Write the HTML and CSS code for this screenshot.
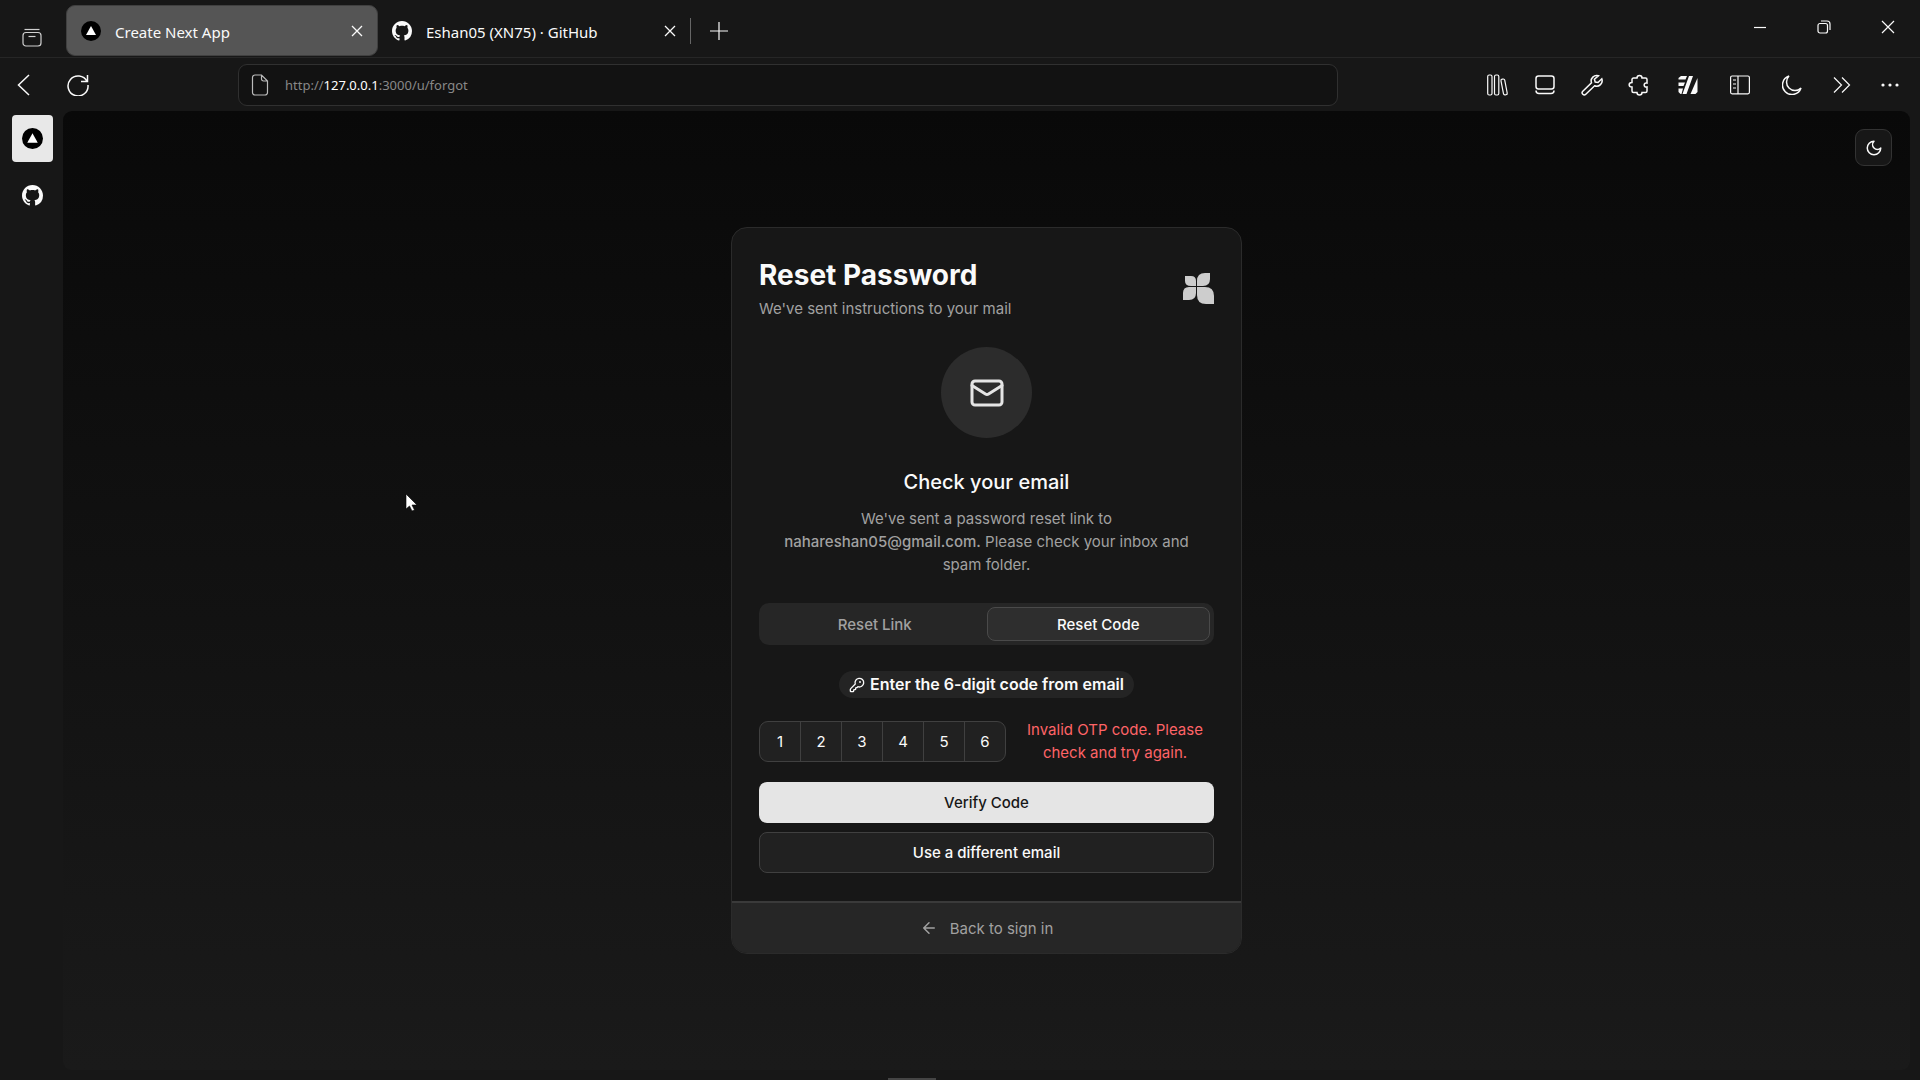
FILE: index.html
```html
<!DOCTYPE html>
<html lang="en">
<head>
<meta charset="utf-8">
<meta name="viewport" content="width=device-width, initial-scale=1">
<title>Create Next App</title>
<link rel="stylesheet" href="styles.css">
</head>
<body>
<svg width="0" height="0" class="sprite" aria-hidden="true">
  <symbol id="github" viewBox="0 0 16 16"><path fill="currentColor" d="M8 0C3.58 0 0 3.58 0 8c0 3.54 2.29 6.53 5.47 7.59.4.07.55-.17.55-.38 0-.19-.01-.82-.01-1.49-2.01.37-2.53-.49-2.69-.94-.09-.23-.48-.94-.82-1.13-.28-.15-.68-.52-.01-.53.63-.01 1.08.58 1.23.82.72 1.21 1.87.87 2.33.66.07-.52.28-.87.51-1.07-1.78-.2-3.64-.89-3.64-3.95 0-.87.31-1.59.82-2.15-.08-.2-.36-1.02.08-2.12 0 0 .67-.21 2.2.82.64-.18 1.32-.27 2-.27s1.36.09 2 .27c1.53-1.04 2.2-.82 2.2-.82.44 1.1.16 1.92.08 2.12.51.56.82 1.27.82 2.15 0 3.07-1.87 3.75-3.65 3.95.29.25.54.73.54 1.48 0 1.07-.01 1.93-.01 2.2 0 .21.15.46.55.38A8.01 8.01 0 0 0 16 8c0-4.42-3.58-8-8-8z"/></symbol>
  <symbol id="next" viewBox="0 0 20 20"><circle cx="10" cy="10" r="10" fill="#000"/><path d="M10 5l5 9H5z" fill="#fff"/></symbol>
  <symbol id="cross" viewBox="0 0 12 12"><path d="M1 1l10 10M11 1L1 11" fill="none" stroke="currentColor" stroke-width="1.3"/></symbol>
</svg>
<div class="browser">
  <header class="titlebar">
    <button class="tool tab-actions" aria-label="Tab actions"><svg width="20" height="20" viewBox="0 0 20 20" class="line"><path d="M2.500 1.500h15"/><rect x="1" y="4.500" width="18" height="13.500" rx="3"/><path d="M6.500 8.500h7"/></svg></button>
    <div class="tab active">
      <svg width="20" height="20"><use href="#next"/></svg><span>Create Next App</span>
      <button class="tab-close" aria-label="Close tab"><svg width="12" height="12"><use href="#cross"/></svg></button>
    </div>
    <div class="tab">
      <svg width="20" height="20"><use href="#github"/></svg><span>Eshan05 (XN75) · GitHub</span>
      <button class="tab-close" aria-label="Close tab"><svg width="12" height="12"><use href="#cross"/></svg></button>
    </div>
    <span class="separator"></span>
    <button class="tool new-tab" aria-label="New tab"><svg width="18" height="18" viewBox="0 0 18 18" class="line"><path d="M9 0v18M0 9h18"/></svg></button>
    <div class="window-controls">
      <button class="tool" aria-label="Minimize"><svg width="14" height="14" viewBox="0 0 14 14" class="line"><path d="M1 7.500h12"/></svg></button>
      <button class="tool" aria-label="Restore"><svg width="14" height="14" viewBox="0 0 14 14" class="line"><rect x="1" y="3.500" width="9.500" height="9.500" rx="2"/><path d="M4 1h6a3 3 0 0 1 3 3v6"/></svg></button>
      <button class="tool" aria-label="Close"><svg width="14" height="14" viewBox="0 0 14 14" class="line"><path d="M1 1l12 12M13 1L1 13"/></svg></button>
    </div>
  </header>

  <nav class="toolbar" aria-label="Browser toolbar">
    <div class="history">
      <button class="tool" aria-label="Back"><svg width="22" height="22" viewBox="0 0 22 22" class="line bold"><path d="M16 1L5.500 11L16 21"/></svg></button>
      <button class="tool" aria-label="Reload"><svg width="22" height="22" viewBox="0 0 22 22" class="line bold"><path d="M20 7.500A10 10 0 1 0 21 11M20.500 1v6.500H14"/></svg></button>
    </div>
    <div class="address">
      <svg width="18" height="22" viewBox="0 0 18 22" class="line"><path d="M10.500 1H4a2.500 2.500 0 0 0-2.500 2.500v15A2.500 2.500 0 0 0 4 21h10a2.500 2.500 0 0 0 2.500-2.500V7zM10.500 1v4A2 2 0 0 0 12.500 7h4"/></svg>
      <span>http://<b>127.0.0.1</b>:3000/u/forgot</span>
    </div>
    <div class="group near">
      <button class="tool" aria-label="Library"><svg width="22" height="22" viewBox="0 0 22 22" class="line"><rect x=".7" y="1" width="4.300" height="20" rx="1.500"/><rect x="7.500" y="1" width="4.300" height="20" rx="1.500"/><rect x="15.200" y="5" width="3.800" height="16" rx="1.500" transform="rotate(-11 17 13)"/></svg></button>
      <button class="tool" aria-label="Panel"><svg width="20" height="20" viewBox="0 0 20 20" class="line bold"><rect x="1" y="1" width="18" height="13" rx="2.500"/><path d="M1 15.500c0 2 1 3 3 3h12c2 0 3-1 3-3"/></svg></button>
      <button class="tool" aria-label="Developer tools"><svg width="22" height="22" viewBox="0 0 22 22" class="line bold"><path d="M17.500 1.800a5.500 5.500 0 0 0-7 7L1.800 17.300a2 2 0 0 0 3 3L13.600 11.800a5.500 5.500 0 0 0 7.200-7L17 8.500l-2.800-.5-.8-2.700z"/></svg></button>
      <button class="tool" aria-label="Extensions"><svg width="22" height="22" viewBox="0 0 22 22" class="line bold"><path d="M5.500 4H9a2.500 2.500 0 0 1 5 0h3.500A1.500 1.500 0 0 1 19 5.500V9c-3.800-1-3.800 5 0 4v4a1.500 1.500 0 0 1-1.500 1.500H14c0 3.300-5 3.300-5 0H5.500A1.500 1.500 0 0 1 4 17v-4c-3.800 0-3.800-4.500 0-4.500v-3A1.500 1.500 0 0 1 5.500 4z"/></svg></button>
    </div>
    <div class="group far">
      <button class="tool" aria-label="Side actions"><svg width="20" height="20" viewBox="0 0 20 20" fill="currentColor"><path d="M3 1h6L7.500 4.500H.5V3zM.5 7.500h6.500L5.500 11H.5zM.5 13.500h4.500L3.500 19H2.500L.5 17zM11 1h4L8.500 19h-4zM19.500 3v14L17.500 19H12.500z"/></svg></button>
      <button class="tool" aria-label="Sidebar"><svg width="20" height="20" viewBox="0 0 20 20" class="line"><rect x=".6" y="1" width="18.800" height="17.800" rx="1.500"/><path d="M8 1v18M3 5h3M3 9h3M3 13h3"/></svg></button>
      <button class="tool" aria-label="Dark reader"><svg width="20" height="20" viewBox="0 0 20 20" class="line bold"><path d="M7 1A9.500 9.500 0 1 0 19 13A8 8 0 0 1 7 1z"/></svg></button>
    </div>
    <div class="group">
      <button class="tool" aria-label="More extensions"><svg width="18" height="18" viewBox="0 0 18 18" class="line"><path d="M1 1.500L8.500 9L1 16.500M9 1.500L16.500 9L9 16.500"/></svg></button>
      <button class="tool" aria-label="Menu"><svg width="18" height="18" viewBox="0 0 18 18" fill="currentColor"><circle cx="2" cy="9" r="1.600"/><circle cx="9" cy="9" r="1.600"/><circle cx="16" cy="9" r="1.600"/></svg></button>
    </div>
  </nav>

  <div class="workspace">
    <aside class="side-tabs">
      <button class="side-tab selected" aria-label="Create Next App"><svg width="21" height="21"><use href="#next"/></svg></button>
      <button class="side-tab" aria-label="GitHub"><svg width="21" height="21"><use href="#github"/></svg></button>
    </aside>
    <main class="page">
      <button class="theme" aria-label="Toggle theme"><svg width="18" height="18" viewBox="0 0 24 24" class="lucide"><path d="M12 3a6 6 0 0 0 9 9 9 9 0 1 1-9-9z"/></svg></button>
      <section class="card">
        <div class="card-body">
          <div class="card-head">
            <div class="heading">
              <h1>Reset Password</h1>
              <p class="muted">We've sent instructions to your mail</p>
            </div>
            <svg class="logo" width="31" height="31" viewBox="0 0 31 31" fill="#cdcdcd"><path d="M2 3h6Q13 3 13 8v5H8Q2 13 2 8z"/><path d="M14 13V8Q14 0 22 0h5v6q0 7-7 7z"/><path d="M0 27V20q0-6 6-6h7v6q0 7-7 7z"/><path d="M14 14h8q9 0 9 9v8H23q-9 0-9-9z"/></svg>
          </div>
          <div class="badge"><svg width="36" height="36" viewBox="0 0 24 24" class="lucide"><rect width="20" height="16" x="2" y="4" rx="2"/><path d="m22 7-8.970 5.700a1.940 1.940 0 0 1-2.060 0L2 7"/></svg></div>
          <h2>Check your email</h2>
          <p class="muted message">We've sent a password reset link to <strong>nahareshan05@gmail.com.</strong> Please check your inbox and spam folder.</p>
          <div class="switch" role="tablist">
            <button role="tab" aria-selected="false">Reset Link</button>
            <button role="tab" aria-selected="true" class="on">Reset Code</button>
          </div>
          <form class="code-form">
            <div class="hint" id="hint"><svg width="16" height="16" viewBox="0 0 24 24" class="lucide"><path d="M2.586 17.414A2 2 0 0 0 2 18.828V21a1 1 0 0 0 1 1h3a1 1 0 0 0 1-1v-1a1 1 0 0 1 1-1h1a1 1 0 0 0 1-1v-1a1 1 0 0 1 1-1h.172a2 2 0 0 0 1.414-.586l.814-.814a6.500 6.500 0 1 0-4-4z"/><circle cx="16.500" cy="7.500" r=".5" fill="currentColor"/></svg>Enter the 6-digit code from email</div>
            <div class="entry">
              <div class="otp" role="group" aria-labelledby="hint">
                <input aria-label="Digit 1" value="1" maxlength="1"><input aria-label="Digit 2" value="2" maxlength="1"><input aria-label="Digit 3" value="3" maxlength="1"><input aria-label="Digit 4" value="4" maxlength="1"><input aria-label="Digit 5" value="5" maxlength="1"><input aria-label="Digit 6" value="6" maxlength="1">
              </div>
              <p class="error">Invalid OTP code. Please check and try again.</p>
            </div>
            <div class="actions">
              <button type="button" class="primary">Verify Code</button>
              <button type="button" class="outline">Use a different email</button>
            </div>
          </form>
        </div>
        <footer><a href="#signin"><svg width="18" height="18" viewBox="0 0 24 24" class="lucide"><path d="m12 19-7-7 7-7M19 12H5"/></svg>Back to sign in</a></footer>
      </section>
    </main>
  </div>
  <span class="handle"></span>
  <svg class="pointer" width="13" height="20" viewBox="0 0 13 20"><path d="M1 1v15l3.500-3 2.500 5 2.500-1-2.500-5H12z" fill="#fff" stroke="#000" stroke-width=".6"/></svg>
</div>
</body>
</html>
```
FILE: styles.css
```css
* { box-sizing: border-box; }
body { margin: 0; background: #171717; color: #fafafa; font-family: Inter, "Liberation Sans", sans-serif; font-size: 15px; line-height: 23px; }
h1, h2, p { margin: 0; }
button, input { font: inherit; color: inherit; border: 0; padding: 0; background: none; }
svg { display: block; flex: none; }
.sprite { position: absolute; }
.line { fill: none; stroke: currentColor; stroke-width: 1.2; }
.line.bold { stroke-width: 1.5; }
.lucide { fill: none; stroke: currentColor; stroke-width: 2; stroke-linecap: round; stroke-linejoin: round; }

.browser { position: relative; min-height: 100vh; display: flex; flex-direction: column; overflow: hidden; }
.tool { display: grid; place-items: center; height: 36px; }

.titlebar { display: flex; align-items: center; height: 58px; border-bottom: 1px solid #262626; font-family: "Noto Sans", sans-serif; }
.tab-actions { width: 66px; padding: 17px 3px 0 0; color: #d0d0d0; }
.tab { display: flex; align-items: center; gap: 14px; width: 312px; height: 51px; padding: 0 14px; margin-top: 4px; border-radius: 9px; }
.tab.active { background: #555; border: 1px solid #404040; }
.tab span { padding-top: 3px; }
.tab-close { margin-left: auto; }
.separator { width: 1px; height: 26px; background: #666; margin: 4px 19px 0 0; }
.new-tab { padding-top: 4px; }
.window-controls { display: flex; margin-left: auto; padding-bottom: 4px; }
.window-controls .tool { width: 64px; }

.toolbar { display: flex; align-items: center; height: 53px; padding-right: 6px; }
.history { display: flex; width: 238px; padding-left: 13px; gap: 32px; }
.address { flex: 1; display: flex; align-items: center; gap: 16px; height: 42px; margin-right: 136px; padding: 0 12px; border: 1px solid #303030; border-radius: 9px; background: #121212; color: #888; font-family: "Noto Sans", sans-serif; font-size: 13px; }
.address svg { color: #bbb; }
.address span { padding-top: 1px; }
.address b { font-weight: 400; color: #fff; }
.group { display: flex; }
.group .tool { width: 48px; }
.group.near .tool { width: 47px; }
.group.far .tool { width: 52px; }

.workspace { flex: 1; display: flex; padding: 0 10px 10px 0; }
.side-tabs { width: 63px; display: flex; flex-direction: column; align-items: center; gap: 10px; padding: 4px 0 0 2px; }
.side-tab { display: grid; place-items: center; width: 41px; height: 47px; border-radius: 4px; }
.side-tab.selected { background: #e8e8e8; }
.page { flex: 1; position: relative; display: grid; place-items: center; border-radius: 9px; background: linear-gradient(#090909, #1a1a1a); }
.theme { position: absolute; top: 18px; right: 18px; display: grid; place-items: center; width: 37px; height: 37px; border: 1px solid #333; border-radius: 9px; background: #171717; }

.card { width: 511px; border: 1px solid #2b2b2b; border-radius: 16px; background: #171717; overflow: hidden; }
.card-body { padding: 28px 27px; display: flex; flex-direction: column; text-align: center; }
.card-head { display: flex; justify-content: space-between; align-items: center; text-align: left; }
.heading { display: grid; gap: 3px; }
h1 { font-size: 28px; line-height: 38px; font-weight: 700; }
.muted { color: #a1a1a1; }
.badge { align-self: center; display: grid; place-items: center; width: 91px; height: 91px; margin: 27px 0 31px; border-radius: 50%; background: #2c2c2c; color: #e5e5e5; }
h2 { font-size: 20px; line-height: 26px; font-weight: 500; }
.message { padding: 0 12px; margin: 12px 0 27px; }
.message strong { font-weight: 500; }
.switch { display: flex; height: 42px; padding: 4px; border-radius: 10px; background: #262626; color: #a1a1a1; font-weight: 500; }
.switch button { flex: 1; border-radius: 8px; border: 1px solid transparent; }
.switch .on { background: #2e2e2e; border-color: #4a4a4a; color: #fafafa; }
.code-form { display: flex; flex-direction: column; margin-top: 26px; }
.hint { align-self: center; display: flex; align-items: center; gap: 5px; height: 27px; padding: 0 10px; border-radius: 14px; background: #242424; font-size: 16px; font-weight: 600; }
.entry { display: flex; align-items: center; margin: 20px 0 18px; }
.otp { display: flex; width: 247px; height: 41px; border: 1px solid #404040; border-radius: 9px; background: #212121; overflow: hidden; }
.otp input { flex: 1; min-width: 0; text-align: center; border-right: 1px solid #404040; }
.otp input:last-child { border-right: 0; }
.error { flex: 1; padding: 0 8px 0 18px; color: #ff6467; }
.actions { display: grid; gap: 9px; font-weight: 500; }
.actions button { height: 41px; border-radius: 8px; }
.primary { background: #e5e5e5; color: #171717; }
.actions .outline { background: #212121; border: 1px solid #404040; }
footer { display: flex; justify-content: center; align-items: center; height: 52px; border-top: 2px solid #3a3a3a; background: #262626; }
footer a { display: flex; align-items: center; gap: 12px; color: #a1a1a1; text-decoration: none; }

.handle { position: absolute; left: 888px; bottom: 0; width: 48px; height: 2px; background: #444; }
.pointer { position: absolute; left: 405px; top: 493px; }
```
